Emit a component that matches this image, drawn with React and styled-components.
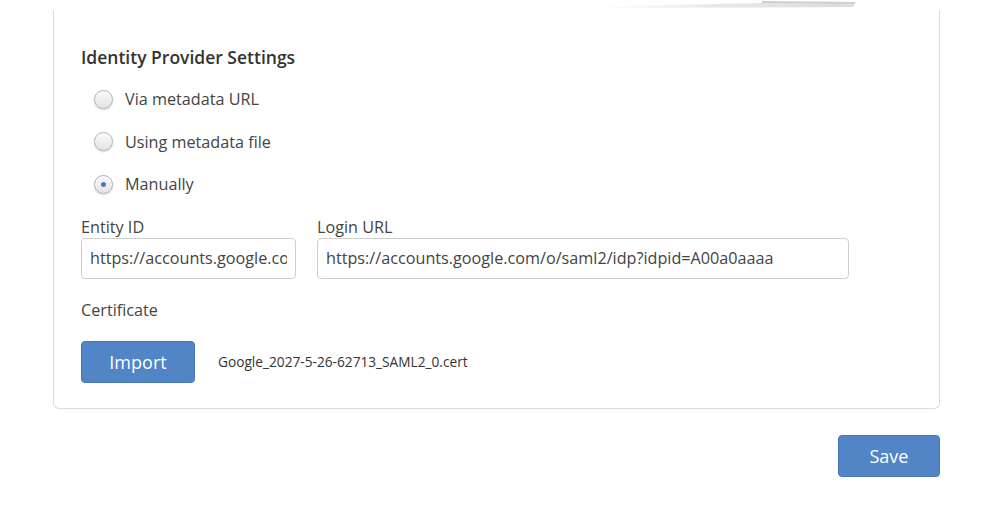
import { useState } from 'react';
import styled, { createGlobalStyle } from 'styled-components';

const GlobalStyle = createGlobalStyle`
  html, body {
    margin: 0;
    padding: 0;
    background: #fff;
  }
  body {
    font-family: "Open Sans", "Liberation Sans", Arial, sans-serif;
    color: #333;
  }
`;

const Page = styled.div`
  position: relative;
  width: 993px;
  height: 529px;
  overflow: hidden;
`;

// Curled shadow left over by the dropdown panel above
const Curl = styled.svg`
  position: absolute;
  top: 0;
  left: 572px;
`;

const Card = styled.section`
  margin: 10px 53px 0;
  border: 1px solid #dcdcdc;
  border-top: none;
  border-radius: 0 0 6px 6px;
  padding: 35px 27px 25px;
`;

const Heading = styled.h3`
  margin: 0 0 9px;
  font-size: 17.5px;
  line-height: 24px;
  font-weight: 600;
  color: #333;
`;

const RadioList = styled.div`
  display: flex;
  flex-direction: column;
`;

const RadioRow = styled.label`
  display: flex;
  align-items: center;
  height: 42.5px;
  padding-left: 13px;
  gap: 12px;
  font-size: 16.2px;
  color: #444;
  cursor: pointer;
`;

const Dot = styled.span`
  box-sizing: border-box;
  width: 19px;
  height: 19px;
  border-radius: 50%;
  border: 1px solid #b4b4b4;
  background: linear-gradient(#fafafa, #e4e4e4);
  box-shadow: inset 0 1px 1px #fff, 0 1px 2px rgba(0, 0, 0, 0.18);
  display: flex;
  align-items: center;
  justify-content: center;

  &::after {
    content: '';
    width: 5px;
    height: 5px;
    border-radius: 50%;
    background: #4a7fb6;
    display: ${({ checked }) => (checked ? 'block' : 'none')};
  }
`;

const Fields = styled.div`
  display: flex;
  gap: 21px;
  margin-top: 10px;
`;

const Field = styled.div`
  display: flex;
  flex-direction: column;
  width: ${({ w }) => w}px;
`;

const Label = styled.div`
  font-size: 16.2px;
  line-height: 22px;
  color: #444;
`;

const Input = styled.input`
  box-sizing: border-box;
  width: 100%;
  height: 41px;
  border: 1px solid #cfcfcf;
  border-radius: 4px;
  padding: 0 8px;
  font-family: inherit;
  font-size: 16.2px;
  color: #444;
  outline: none;
`;

const CertLabel = styled(Label)`
  margin-top: 20px;
`;

const ImportRow = styled.div`
  display: flex;
  align-items: center;
  gap: 23px;
  margin-top: 20px;
`;

const Button = styled.button`
  box-sizing: border-box;
  width: ${({ w }) => w}px;
  height: 42px;
  border: 1px solid #4676b3;
  border-radius: 4px;
  background: #5185c6;
  color: #fff;
  font-family: inherit;
  font-size: 18px;
  cursor: pointer;
`;

const FileName = styled.span`
  font-size: 13.7px;
  color: #333;
`;

const Footer = styled.div`
  display: flex;
  justify-content: flex-end;
  margin: 26px 53px 0;
`;

const options = ['Via metadata URL', 'Using metadata file', 'Manually'];

export default function App() {
  const [mode, setMode] = useState('Manually');

  return (
    <Page>
      <GlobalStyle />
      <Curl width="286" height="10" viewBox="0 0 286 10">
        <defs>
          <linearGradient id="curlFill" x1="0" x2="1" y1="0" y2="0">
            <stop offset="0" stopColor="#f4f4f4" stopOpacity="0" />
            <stop offset="0.5" stopColor="#e8e8e8" />
            <stop offset="1" stopColor="#dcdcdc" />
          </linearGradient>
        </defs>
        <path d="M0 8 Q140 3 282 2 L284 2 L281 7 Q140 8 0 8 Z" fill="url(#curlFill)" />
        <path d="M190 1 L283 2 L282 4 Q230 3 190 3 Z" fill="#cfcfcf" />
      </Curl>
      <Card>
        <Heading>Identity Provider Settings</Heading>
        <RadioList>
          {options.map((o) => (
            <RadioRow key={o} onClick={() => setMode(o)}>
              <Dot checked={mode === o} />
              {o}
            </RadioRow>
          ))}
        </RadioList>
        <Fields>
          <Field w={215}>
            <Label>Entity ID</Label>
            <Input defaultValue="https://accounts.google.com/o/saml2?idpid=A00a0aaaa" />
          </Field>
          <Field w={532}>
            <Label>Login URL</Label>
            <Input defaultValue="https://accounts.google.com/o/saml2/idp?idpid=A00a0aaaa" />
          </Field>
        </Fields>
        <CertLabel>Certificate</CertLabel>
        <ImportRow>
          <Button w={114}>Import</Button>
          <FileName>Google_2027-5-26-62713_SAML2_0.cert</FileName>
        </ImportRow>
      </Card>
      <Footer>
        <Button w={102}>Save</Button>
      </Footer>
    </Page>
  );
}
